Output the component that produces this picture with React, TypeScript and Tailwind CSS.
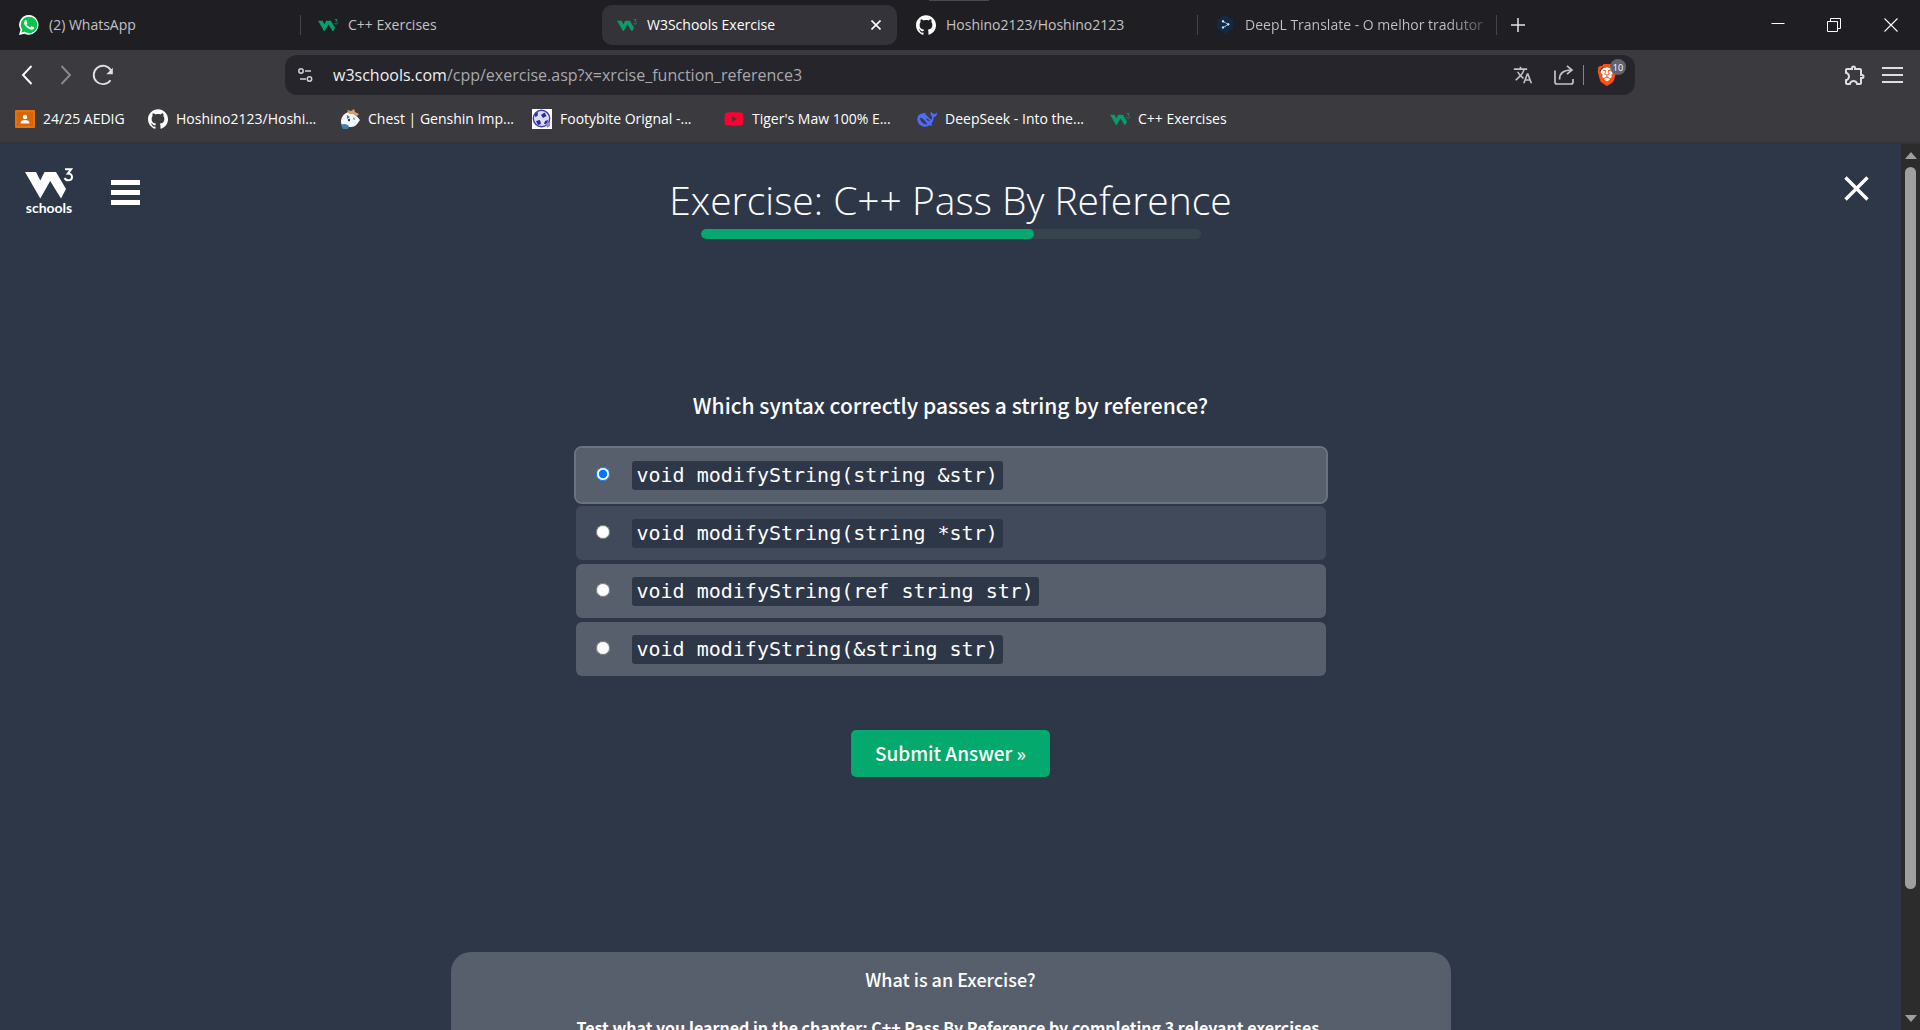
import React, { useState } from "react";
import { SiBrave, SiDeepl, SiGithub } from "react-icons/si";
import { MdOutlineExtension, MdTranslate } from "react-icons/md";
import { FaYoutube } from "react-icons/fa";

type IconProps = { className?: string };

function W3Mark({ className }: IconProps) {
  return (
    <svg viewBox="0 0 48 31" className={className} aria-hidden="true">
      <path fill="currentColor" d="M0 4H11L15.3 12.5L19.5 4H31L41 21L36 30.5L25.2 13L15.3 30.5Z" />
      <path
        fill="none"
        stroke="currentColor"
        strokeWidth="2"
        d="M40 1.2H46.2L42.8 5.6C45.6 5.4 47 7 47 8.9C47 11 45.4 12.3 43.3 12.3C41.4 12.3 40.2 11.4 39.6 10"
      />
    </svg>
  );
}

function WhatsAppIcon({ className }: IconProps) {
  return (
    <svg viewBox="0 0 24 24" className={className} aria-hidden="true">
      <path fill="#fff" d="M12 0A11.8 11.8 0 0 0 1.8 17.8L0 24L6.4 22.4A11.8 11.8 0 1 0 12 0Z" />
      <path fill="#0ac34a" d="M12 2A9.9 9.9 0 0 0 3.9 17.5L2.8 21.3L6.7 20.2A9.9 9.9 0 1 0 12 2Z" />
      <path
        fill="#fff"
        d="M17.472 14.382c-.297-.149-1.758-.867-2.03-.967-.273-.099-.471-.148-.67.15-.197.297-.767.966-.94 1.164-.173.199-.347.223-.644.075-.297-.15-1.255-.463-2.39-1.475-.883-.788-1.48-1.761-1.653-2.059-.173-.297-.018-.458.13-.606.134-.133.298-.347.446-.52.149-.174.198-.298.298-.497.099-.198.05-.371-.025-.52-.075-.149-.669-1.612-.916-2.207-.242-.579-.487-.5-.669-.51-.173-.008-.371-.01-.57-.01-.198 0-.52.074-.792.372-.272.297-1.04 1.016-1.04 2.479 0 1.462 1.065 2.875 1.213 3.074.149.198 2.096 3.2 5.077 4.487.709.306 1.262.489 1.694.625.712.227 1.36.195 1.871.118.571-.085 1.758-.719 2.006-1.413.248-.694.248-1.289.173-1.413-.074-.124-.272-.198-.57-.347"
      />
    </svg>
  );
}

function DeepLIcon() {
  return (
    <span className="relative flex size-5 items-center justify-center">
      <span className="absolute size-2.5 bg-[#e8edf2]" />
      <SiDeepl className="relative size-5 text-[#0f2b46]" />
    </span>
  );
}

function ClassroomIcon() {
  return (
    <svg viewBox="0 0 20 20" className="size-5" aria-hidden="true">
      <rect x="0" y="1" width="20" height="18" rx="1" fill="#e8710a" />
      <rect x="2" y="3" width="16" height="14" fill="#d9650a" />
      <circle cx="10" cy="8" r="2.2" fill="#fff" />
      <path d="M5.5 14.5c0-2.6 2-3.5 4.5-3.5s4.5.9 4.5 3.5z" fill="#fff" />
    </svg>
  );
}

function ChestIcon() {
  return (
    <svg viewBox="0 0 20 20" className="size-5" aria-hidden="true">
      <path d="M1 13C1 8 4 4 9 3C14 4 17 7 20 11C18 13 17 18 11 18C5 18 1 17 1 13Z" fill="#f4f8fb" />
      <path d="M7 1L11 2L14 0L15 3L19 5L17 7L13 5L9 5Z" fill="#d9a066" />
      <path d="M1 16C4 14 7 15 9 17L8 20H3Z" fill="#3f7fae" />
      <path d="M7 6L10 8L7 10Z" fill="#5b6f83" />
      <circle cx="9" cy="11" r="1.2" fill="#233a55" />
      <path d="M14 8L15 11L13 10Z" fill="#5b6f83" />
    </svg>
  );
}

function BallIcon() {
  return (
    <svg viewBox="0 0 20 20" className="size-5" aria-hidden="true">
      <rect width="20" height="20" fill="#fff" />
      <circle cx="9.5" cy="9.5" r="8.2" fill="#dcdcf6" stroke="#3c3cae" strokeWidth="1.4" />
      <path d="M9 6L12.5 3.500L14.500 7L11 9Z" fill="#2a2a9c" />
      <path d="M3 5L6 3L5.500 7L3 8ZM4 12L8 11L9 15L6 16ZM13 12L16 11L15 15L12 15Z" fill="#2a2a9c" />
      <path d="M14 14L18 13V17L15 19Z" fill="#8c8cd8" />
    </svg>
  );
}

function WhaleIcon() {
  return (
    <svg viewBox="0 0 24 24" className="size-5" aria-hidden="true">
      <path
        fill="#4d6bfe"
        d="M23.700 4.500c-.3-.1-.5.1-.7.300-.6.700-1.400 1.200-2.600 1.100-1.300-.1-2.400-.9-2.900-2.300-.2-.4-.6-.3-.8 0-.8 1.700-.7 3.500.6 4.900.8.800 1 1.900.6 3l-.5 1.300c-1-.4-1.900-1.100-2.700-1.900C13.300 9.500 12.200 7.900 10.300 6.700c-.8-.4-.4-1 .2-1.200.5-.2.200-.8-1.500-.8-1.700 0-3 .9-4.500 1C1.700 6.500 0 9.500.400 13c.4 3.700 3.200 7.700 8 8.300 3 .3 5.400-.6 6.600-1.700.7.300 2.900.5 3.300-.2.400-.5-1.300-1-1.200-1.400 1.800-2.100 2.800-4.500 3.200-8.300 1.800-.1 3.700-2 3.800-4.500 0-.3-.1-.5-.4-.7z"
      />
      <path
        fill="#3b3a3f"
        d="M3.500 10.500c3.300.2 5.500 2.700 7.500 5.800.6.900 1 1.500 1.800 2.100-5 .2-8.800-2.700-9.300-7.900zM11 11.600c2.200-.4 3.700 1.600 4.300 3.200-2-.3-3.500-1.300-4.300-3.200z"
      />
    </svg>
  );
}

type TabData = { title: string; icon: React.ReactNode; active?: boolean; divider?: boolean; fade?: boolean };

const tabs: TabData[] = [
  { title: "(2) WhatsApp", icon: <WhatsAppIcon className="size-5" />, divider: true },
  { title: "C++ Exercises", icon: <W3Mark className="w-5 text-[#04a06a]" /> },
  { title: "W3Schools Exercise", icon: <W3Mark className="w-5 text-[#0b9a68]" />, active: true },
  { title: "Hoshino2123/Hoshino2123", icon: <SiGithub className="size-5 text-white" />, divider: true },
  { title: "DeepL Translate - O melhor tradutor", icon: <DeepLIcon />, divider: true, fade: true },
];

const bookmarks: { title: string; icon: React.ReactNode; width: string }[] = [
  { title: "24/25 AEDIG", icon: <ClassroomIcon />, width: "w-[133px]" },
  { title: "Hoshino2123/Hoshi...", icon: <SiGithub className="size-5" />, width: "w-48" },
  { title: "Chest | Genshin Imp...", icon: <ChestIcon />, width: "w-48" },
  { title: "Footybite Orignal -...", icon: <BallIcon />, width: "w-48" },
  { title: "Tiger's Maw 100% E...", icon: <FaYoutube className="size-5 text-[#ff0033]" />, width: "w-[193px]" },
  { title: "DeepSeek - Into the...", icon: <WhaleIcon />, width: "w-[193px]" },
  { title: "C++ Exercises", icon: <W3Mark className="w-5 text-[#0b9a68]" />, width: "w-48" },
];

function Tab({ tab }: { tab: TabData }) {
  return (
    <div className="relative flex h-full w-[299px] shrink items-center">
      <div
        className={
          tab.active
            ? "ml-1 flex h-10 min-w-0 flex-1 items-center gap-2 rounded-[10px] bg-[#343339] pr-3 pl-[15px] text-white"
            : "flex h-10 min-w-0 flex-1 items-center gap-2 pr-3 pl-[19px] text-[#c3c2c6]"
        }
      >
        <span className="flex w-5 shrink-0 justify-center">{tab.icon}</span>
        <span
          className={
            tab.fade
              ? "min-w-0 flex-1 bg-linear-to-r from-[#c3c2c6] from-85% to-[#55545a] bg-clip-text pl-0.5 whitespace-nowrap text-transparent"
              : "min-w-0 flex-1 truncate pl-0.5"
          }
        >
          {tab.title}
        </span>
        {tab.active && (
          <button type="button" aria-label="Close tab" className="p-1">
            <svg viewBox="0 0 10 10" className="size-2.5" stroke="currentColor" strokeWidth="1.6">
              <path d="M0.500 0.500L9.500 9.500M9.500 0.500L0.500 9.500" />
            </svg>
          </button>
        )}
      </div>
      {tab.divider && <span className="absolute top-[15px] -right-0.5 h-5 w-px bg-[#444348]" />}
    </div>
  );
}

function TabBar() {
  return (
    <div className="relative flex h-[50px] items-center bg-[#1f1e23] text-sm">
      <span className="absolute top-0 left-[929px] h-px w-[60px] bg-[#4a494c]" />
      {tabs.map((tab) => (
        <Tab key={tab.title} tab={tab} />
      ))}
      <button type="button" aria-label="New tab" className="ml-3 p-1 text-[#e4e4e6]">
        <svg viewBox="0 0 14 14" className="size-3.5" stroke="currentColor" strokeWidth="1.5">
          <path d="M7 0V14M0 7H14" />
        </svg>
      </button>
      <div className="ml-auto flex h-full items-center text-white">
        <button type="button" aria-label="Minimize" className="flex h-full w-14 items-center justify-center">
          <svg viewBox="0 0 14 14" className="size-3.5" stroke="currentColor" strokeWidth="1">
            <path d="M0.500 5.500H13.500" />
          </svg>
        </button>
        <button type="button" aria-label="Restore" className="flex h-full w-14 items-center justify-center">
          <svg viewBox="0 0 14 14" className="size-3.5" fill="none" stroke="currentColor" strokeWidth="1">
            <path d="M0.500 3.500H10.500V13.500H0.500ZM3.500 3.500V0.500H13.500V10.500H10.500" />
          </svg>
        </button>
        <button type="button" aria-label="Close" className="flex h-full w-[58px] items-center justify-center">
          <svg viewBox="0 0 14 14" className="size-3.5" stroke="currentColor" strokeWidth="1.1">
            <path d="M0.500 0.500L13.500 13.500M13.500 0.500L0.500 13.500" />
          </svg>
        </button>
      </div>
    </div>
  );
}

function Toolbar() {
  return (
    <div className="flex h-[50px] items-center bg-[#3b3a3f] text-[#dedde1]">
      <div className="flex w-[285px] shrink-0 items-center pl-[21px]">
        <button type="button" aria-label="Back">
          <svg viewBox="0 0 12 20" className="h-5 w-3 text-white" fill="none" stroke="currentColor" strokeWidth="1.9">
            <path d="M10.500 1L2 10L10.500 19" />
          </svg>
        </button>
        <button type="button" aria-label="Forward" className="ml-[27px]">
          <svg viewBox="0 0 12 20" className="h-5 w-3 text-[#8b8a8e]" fill="none" stroke="currentColor" strokeWidth="1.9">
            <path d="M1.500 1L10 10L1.500 19" />
          </svg>
        </button>
        <button type="button" aria-label="Reload" className="ml-5">
          <svg viewBox="0 0 22 22" className="size-[22px]" fill="none" stroke="currentColor" strokeWidth="1.9">
            <path d="M18.500 16.200A9.200 9.200 0 1 1 19 6.500" />
            <path d="M20.800 3.800V10.200H14.300Z" fill="currentColor" stroke="none" />
          </svg>
        </button>
      </div>
      <div className="flex h-10 w-[1350px] items-center rounded-xl bg-[#26252b] pr-[7px] pl-3">
        <button type="button" aria-label="Site settings" className="text-[#d3d2d6]">
          <svg viewBox="0 0 16 16" className="size-4" fill="none" stroke="currentColor" strokeWidth="1.5">
            <circle cx="4" cy="4" r="2.200" />
            <path d="M8 4H14" />
            <circle cx="12.500" cy="12" r="2.200" />
            <path d="M3 12H9" />
          </svg>
        </button>
        <a href="#address" className="ml-5 flex-1 truncate text-[#a9a8ad]">
          <span className="text-[#efeff1]">w3schools.com</span>/cpp/exercise.asp?x=xrcise_function_reference3
        </a>
        <button type="button" aria-label="Translate" className="text-[#c3c2c6]">
          <MdTranslate className="size-5" />
        </button>
        <button type="button" aria-label="Share" className="ml-5 text-[#c3c2c6]">
          <svg viewBox="0 0 22 20" className="h-5 w-[22px]" fill="none" stroke="currentColor" strokeWidth="1.7">
            <path d="M2 5.500V17Q2 19 4 19H18Q20 19 20 17V14" />
            <path d="M6.500 14.500C6.500 8 10 5 18.500 5M14 0.800L19 5L14 9.200" />
          </svg>
        </button>
        <span className="mr-3 ml-2 h-5 w-px bg-[#85848a]" />
        <button type="button" aria-label="Brave Shields, 10 blocked" className="relative mr-2.5">
          <span className="relative flex h-8 items-center">
            <span className="absolute top-2 left-1 h-4 w-3.5 rounded-full bg-white" />
            <SiBrave className="relative size-[22px] text-[#fb5012]" />
          </span>
          <span className="absolute top-0 left-3.5 flex size-4 items-center justify-center rounded-full bg-[#62636f] text-[9px] leading-none text-white">
            10
          </span>
        </button>
      </div>
      <div className="ml-auto flex items-center gap-[15px] pr-[17px]">
        <button type="button" aria-label="Extensions">
          <MdOutlineExtension className="size-6" />
        </button>
        <button type="button" aria-label="Menu">
          <svg viewBox="0 0 21 18" className="h-[18px] w-[21px]" stroke="currentColor" strokeWidth="2">
            <path d="M0 2H21M0 9H21M0 16H21" />
          </svg>
        </button>
      </div>
    </div>
  );
}

function BookmarkBar() {
  return (
    <nav aria-label="Bookmarks" className="flex h-11 items-center border-b-2 border-[#333238] bg-[#3b3a3f] pb-1 pl-[15px] text-sm text-white">
      {bookmarks.map((b) => (
        <a key={b.title} href="#bookmark" className={"flex shrink-0 items-center gap-2 whitespace-nowrap " + b.width}>
          <span className="flex w-5 shrink-0 justify-center">{b.icon}</span>
          {b.title}
        </a>
      ))}
    </nav>
  );
}

const options = [
  { code: "void modifyString(string &str)", tone: "bg-[#585f6c]" },
  { code: "void modifyString(string *str)", tone: "bg-[#414a5b]" },
  { code: "void modifyString(ref string str)", tone: "bg-[#585f6c]" },
  { code: "void modifyString(&string str)", tone: "bg-[#585f6c]" },
];

function Exercise() {
  const [selected, setSelected] = useState(0);
  return (
    <form className="mt-[150px] flex flex-col items-center" onSubmit={(e) => e.preventDefault()}>
      <fieldset className="flex w-full max-w-[750px] flex-col gap-1">
        <legend className="mx-auto mb-[27px] text-[21px] leading-8 font-medium">
          Which syntax correctly passes a string by reference?
        </legend>
        {options.map((o, i) => (
          <label
            key={o.code}
            className={
              "flex h-[54px] items-center gap-[22px] rounded-md pl-5 " +
              o.tone +
              (i === selected ? " outline-2 outline-[#6c7380]" : "")
            }
          >
            <input
              type="radio"
              name="answer"
              checked={i === selected}
              onChange={() => setSelected(i)}
              className="mb-0.5 size-3.5 accent-[#0075ff]"
            />
            <code className="rounded-[3px] bg-[#2e3748] px-[5px] font-['DejaVu_Sans_Mono',monospace] text-[20px] leading-[29px]">
              {o.code}
            </code>
          </label>
        ))}
      </fieldset>
      <button type="submit" className="mt-[54px] h-[47px] rounded-[5px] bg-[#04aa6d] px-6 text-[19px] font-medium">
        Submit Answer »
      </button>
    </form>
  );
}

function Page() {
  return (
    <main className="relative min-w-0 flex-1 overflow-hidden bg-[#2e3748] font-['Noto_Sans_CJK_SC',sans-serif] text-white">
      <div className="absolute top-6 left-[25px] flex items-start gap-[38px]">
        <a href="#home" aria-label="W3Schools home" className="flex flex-col items-center">
          <W3Mark className="w-12" />
          <span className="font-['Lato',sans-serif] text-sm leading-[18px] font-bold">schools</span>
        </a>
        <button type="button" aria-label="Open menu" className="mt-3 flex w-[29px] flex-col gap-[5px]">
          <span className="h-[5px] bg-white" />
          <span className="h-[5px] bg-white" />
          <span className="h-[5px] bg-white" />
        </button>
      </div>
      <button type="button" aria-label="Close exercise" className="absolute top-8 right-8">
        <svg viewBox="0 0 25 25" className="size-[25px]" stroke="currentColor" strokeWidth="3.400">
          <path d="M1.500 1.500L23.500 23.500M23.500 1.500L1.500 23.500" />
        </svg>
      </button>
      <header className="flex flex-col items-center pt-7">
        <h1 className="mb-0.5 font-['Open_Sans',sans-serif] text-[39px] leading-[55px] font-light">Exercise: C++ Pass By Reference</h1>
        <div className="h-2.5 w-full max-w-[500px] overflow-hidden rounded-full bg-[#38444d]">
          <div className="h-full w-2/3 rounded-full bg-[#04aa6d]" />
        </div>
      </header>
      <Exercise />
      <section className="mx-auto mt-[175px] w-full max-w-[1000px] rounded-t-[20px] bg-[#585f6c] pt-[11px] pb-16 text-center leading-8">
        <h2 className="text-lg leading-8 font-medium">What is an Exercise?</h2>
        <p className="mt-4 font-bold">Test what you learned in the chapter: C++ Pass By Reference by completing 3 relevant exercises.</p>
      </section>
    </main>
  );
}

function ScrollBar() {
  return (
    <div className="flex w-[19px] shrink-0 flex-col items-center bg-[#2c2c2c] py-2">
      <svg viewBox="0 0 12 7" className="h-[7px] w-3 fill-[#9f9f9f]">
        <path d="M6 0L12 7H0Z" />
      </svg>
      <div className="my-2 flex w-[11px] flex-1 flex-col">
        <div className="h-[86%] rounded-full bg-[#9f9f9f]" />
      </div>
      <svg viewBox="0 0 12 7" className="h-[7px] w-3 fill-[#9f9f9f]">
        <path d="M0 0H12L6 7Z" />
      </svg>
    </div>
  );
}

export default function App() {
  return (
    <div className="flex h-screen flex-col overflow-hidden bg-[#2e3748] font-['Open_Sans',sans-serif]">
      <TabBar />
      <Toolbar />
      <BookmarkBar />
      <div className="flex min-h-0 flex-1">
        <Page />
        <ScrollBar />
      </div>
    </div>
  );
}
